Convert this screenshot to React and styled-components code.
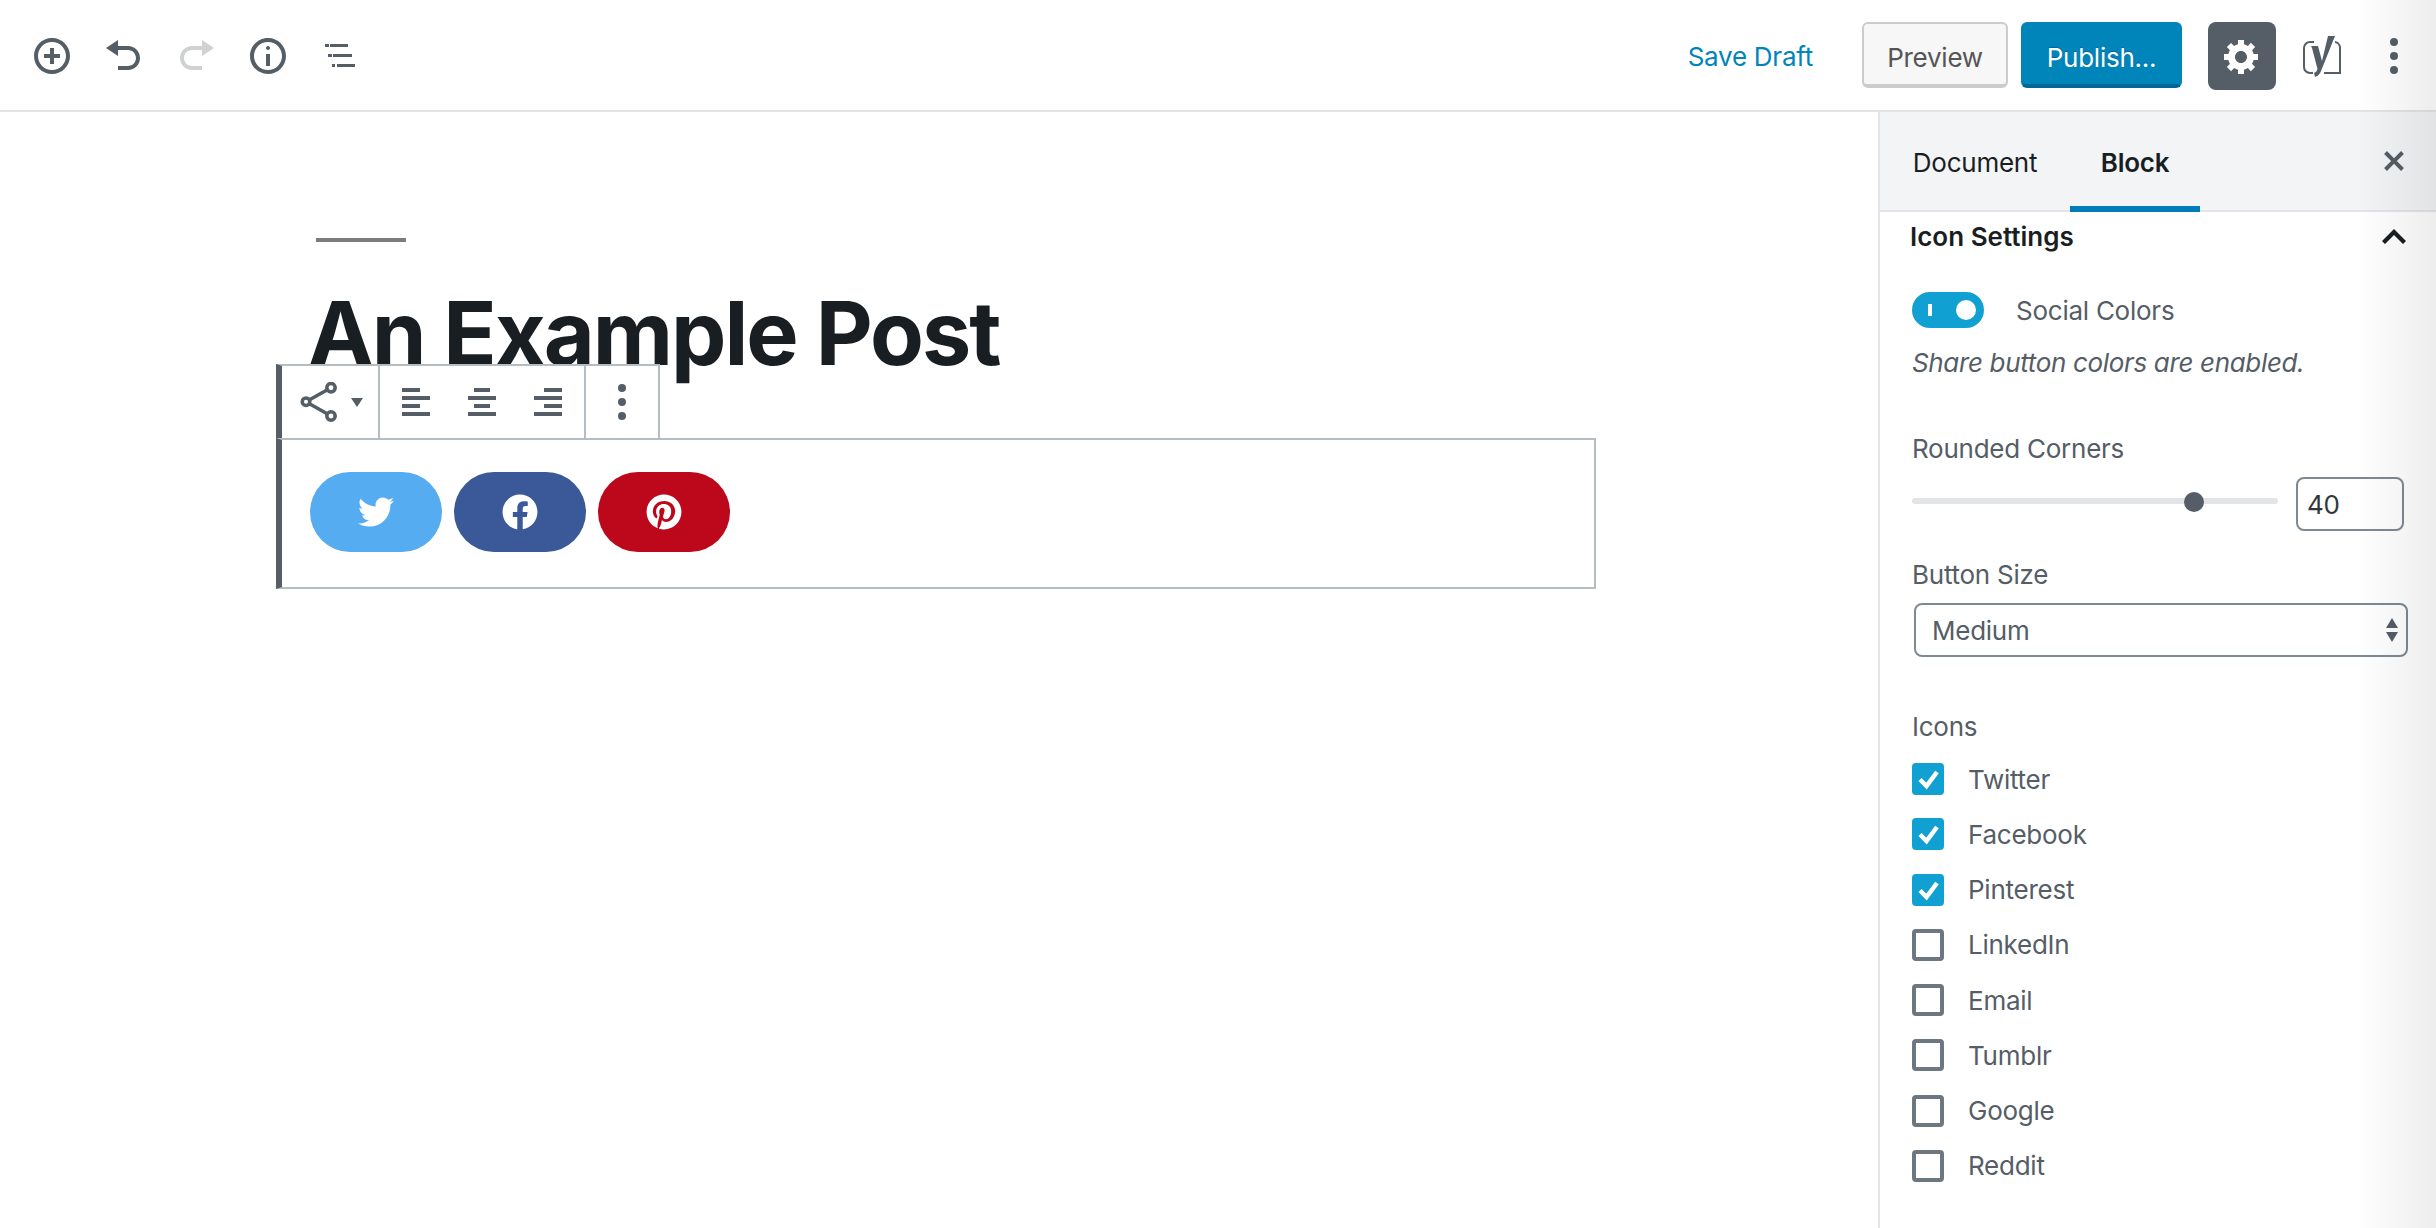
import React from "react";
import styled, { createGlobalStyle } from "styled-components";
import { FaTwitter, FaFacebook, FaPinterest } from "react-icons/fa";

const GlobalStyle = createGlobalStyle`
  html, body {
    margin: 0;
    padding: 0;
    background: #fff;
  }
  body {
    font-family: Inter, "Liberation Sans", sans-serif;
    letter-spacing: -0.25px;
    color: #555d66;
    overflow: hidden;
  }
  * {
    box-sizing: border-box;
  }
`;

const Page = styled.div`
  position: relative;
  width: 2436px;
  height: 1228px;
  display: flex;
  flex-direction: column;
  overflow: hidden;
`;

const EdgeShade = styled.div`
  position: absolute;
  top: 0;
  right: 0;
  bottom: 0;
  width: 80px;
  pointer-events: none;
  background: linear-gradient(to right, rgba(0, 0, 0, 0), rgba(0, 0, 0, 0.07));
`;

const TopBar = styled.header`
  height: 112px;
  flex: none;
  border-bottom: 2px solid #e2e4e7;
  display: flex;
  align-items: center;
  justify-content: space-between;
  padding: 2px 22px 0 32px;
`;

const ToolGroup = styled.div`
  display: flex;
  align-items: center;
  gap: 32px;
`;

const Actions = styled.div`
  display: flex;
  align-items: center;
`;

const Icon = styled.svg`
  width: 40px;
  height: 40px;
  display: block;
  flex: none;
  fill: ${(p) => p.$color || "#555d66"};
`;

const SaveDraft = styled.span`
  font-size: 26px;
  color: #0085ba;
  margin-right: 49px;
`;

const Button = styled.div`
  height: 66px;
  width: ${(p) => p.$width}px;
  margin-top: -2px;
  padding-top: 6px;
  display: flex;
  align-items: center;
  justify-content: center;
  font-size: 26px;
  border-radius: 6px;
  border: 2px solid ${(p) => (p.$primary ? "#0085ba" : "#cccccc")};
  border-bottom: 4px solid ${(p) => (p.$primary ? "#006799" : "#cccccc")};
  background: ${(p) => (p.$primary ? "#0085ba" : "#f7f7f7")};
  color: ${(p) => (p.$primary ? "#ffffff" : "#555555")};
  text-shadow: ${(p) => (p.$primary ? "0 -1px 1px #006799" : "none")};
  margin-right: ${(p) => p.$after}px;
`;

const GearButton = styled.div`
  width: 68px;
  height: 68px;
  border-radius: 8px;
  background: #555d66;
  display: flex;
  align-items: center;
  justify-content: center;
  margin-right: 25px;
`;

const YoastMark = styled.svg`
  width: 42px;
  height: 44px;
  display: block;
  margin-right: 31px;
`;

const Main = styled.div`
  flex: 1;
  display: flex;
  min-height: 0;
`;

const Editor = styled.main`
  flex: 1;
  padding: 126px 0 0 276px;
`;

const Separator = styled.div`
  width: 90px;
  height: 4px;
  background: #7c7c7c;
  margin-left: 40px;
`;

const Title = styled.h1`
  margin: 31px 0 0 32px;
  font-size: 88px;
  line-height: 120px;
  font-weight: 700;
  letter-spacing: -2px;
  color: #191e23;
  white-space: nowrap;
`;

const Block = styled.section`
  position: relative;
  width: 1320px;
  height: 151px;
  margin-top: 45px;
  border-left: 6px solid #555d66;
  border-right: 2px solid #b5bcc2;
  border-top: 2px solid #b5bcc2;
  border-bottom: 2px solid #b5bcc2;
  padding: 32px 0 0 28px;
  display: flex;
  gap: 12px;
`;

const BlockToolbar = styled.div`
  position: absolute;
  left: -6px;
  bottom: 100%;
  height: 74px;
  margin-bottom: 2px;
  display: flex;
  background: #fff;
  border-left: 6px solid #555d66;
  border-top: 2px solid #b5bcc2;
`;

const ToolbarGroup = styled.div`
  width: ${(p) => p.$width}px;
  border-right: 2px solid #b5bcc2;
  display: flex;
  align-items: center;
  justify-content: center;
  gap: ${(p) => p.$gap || 0}px;
`;

const Caret = styled.span`
  width: 0;
  height: 0;
  border-left: 6px solid transparent;
  border-right: 6px solid transparent;
  border-top: 9px solid #555d66;
  margin-left: 13px;
`;

const ShareButton = styled.div`
  width: 132px;
  height: 80px;
  border-radius: 40px;
  background: ${(p) => p.$bg};
  color: #fff;
  display: flex;
  align-items: center;
  justify-content: center;
  font-size: 36px;
`;

const Sidebar = styled.aside`
  width: 558px;
  flex: none;
  border-left: 2px solid #e2e4e7;
  display: flex;
  flex-direction: column;
`;

const Tabs = styled.div`
  height: 100px;
  flex: none;
  background: #f3f4f5;
  border-bottom: 2px solid #e2e4e7;
  display: flex;
  align-items: stretch;
  gap: 32px;
  padding: 0 22px 0 32px;
`;

const Tab = styled.div`
  width: ${(p) => p.$width}px;
  display: flex;
  align-items: center;
  justify-content: center;
  font-size: 26px;
  margin-bottom: -2px;
  color: #191e23;
  font-weight: ${(p) => (p.$active ? 600 : 400)};
  border-bottom: 6px solid ${(p) => (p.$active ? "#007cba" : "transparent")};
  padding-top: 6px;
`;

const CloseSlot = styled.div`
  margin-left: auto;
  display: flex;
  align-items: center;
`;

const PanelBody = styled.div`
  flex: 1;
  padding: 0 30px 0 32px;
`;

const PanelHeading = styled.div`
  height: 48px;
  display: flex;
  align-items: center;
  justify-content: space-between;
  font-size: 26px;
  font-weight: 600;
  letter-spacing: 0;
  color: #191e23;
  margin: 0 -8px 0 -2px;
`;

const ToggleRow = styled.div`
  display: flex;
  align-items: center;
  margin-top: 32px;
  height: 36px;
`;

const Toggle = styled.div`
  position: relative;
  width: 72px;
  height: 36px;
  border-radius: 18px;
  background: #11a0d2;
  flex: none;
  &::before {
    content: "";
    position: absolute;
    left: 16px;
    top: 12px;
    width: 4px;
    height: 12px;
    background: #fff;
  }
  &::after {
    content: "";
    position: absolute;
    right: 8px;
    top: 8px;
    width: 20px;
    height: 20px;
    border-radius: 50%;
    background: #fff;
  }
`;

const ToggleLabel = styled.span`
  margin-left: 32px;
  font-size: 26px;
`;

const Help = styled.div`
  margin-top: 17px;
  font-size: 26px;
  line-height: 36px;
  font-style: italic;
  letter-spacing: -0.34px;
`;

const FieldLabel = styled.div`
  font-size: 26px;
  line-height: 36px;
  margin-top: ${(p) => p.$top}px;
`;

const SliderRow = styled.div`
  display: flex;
  align-items: center;
  margin-top: 10px;
`;

const SliderTrack = styled.div`
  position: relative;
  width: 366px;
  height: 6px;
  margin-bottom: 6px;
  border-radius: 3px;
  background: #e2e4e7;
`;

const SliderKnob = styled.div`
  position: absolute;
  top: -6px;
  left: ${(p) => p.$left}px;
  width: 20px;
  height: 20px;
  border-radius: 50%;
  background: #555d66;
`;

const NumberInput = styled.div`
  width: 108px;
  height: 54px;
  margin-left: 18px;
  border: 2px solid #7e8993;
  border-radius: 8px;
  padding-left: 9px;
  display: flex;
  align-items: center;
  font-size: 26px;
  color: #32373c;
`;

const Select = styled.div`
  width: 494px;
  height: 54px;
  margin: 10px 0 0 2px;
  border: 2px solid #7e8993;
  border-radius: 8px;
  padding: 0 8px 0 16px;
  display: flex;
  align-items: center;
  justify-content: space-between;
  font-size: 26px;
`;

const SelectArrows = styled.svg`
  width: 12px;
  height: 24px;
  fill: #555d66;
  display: block;
`;

const CheckList = styled.div`
  display: flex;
  flex-direction: column;
  gap: 23.25px;
  margin-top: 18px;
`;

const CheckRow = styled.div`
  height: 32px;
  display: flex;
  align-items: center;
  font-size: 26px;
`;

const Checkbox = styled.div`
  width: 32px;
  height: 32px;
  flex: none;
  border-radius: 4px;
  background: ${(p) => (p.$checked ? "#11a0d2" : "#fff")};
  border: ${(p) => (p.$checked ? "0" : "4px solid #6c7781")};
  margin-right: 24px;
  display: flex;
  align-items: center;
  justify-content: center;
`;

const CheckMark = styled.svg`
  width: 24px;
  height: 24px;
  display: block;
  overflow: visible;
`;

const icons = {
  insert:
    "M10 1c-5 0-9 4-9 9s4 9 9 9 9-4 9-9-4-9-9-9zm0 16c-3.9 0-7-3.1-7-7s3.1-7 7-7 7 3.1 7 7-3.1 7-7 7zm1-11H9v3H6v2h3v3h2v-3h3V9h-3V6z",
  undo: "M12 5H7V2L1 6l6 4V7h5c2.2 0 4 1.8 4 4s-1.8 4-4 4H7v2h5c3.3 0 6-2.7 6-6s-2.7-6-6-6z",
  redo: "M8 5h5V2l6 4-6 4V7H8c-2.2 0-4 1.8-4 4s1.8 4 4 4h5v2H8c-3.3 0-6-2.7-6-6s2.7-6 6-6z",
  info: "M10 1c-5 0-9 4-9 9s4 9 9 9 9-4 9-9-4-9-9-9zm0 16c-3.9 0-7-3.1-7-7s3.1-7 7-7 7 3.1 7 7-3.1 7-7 7zM9 9h2v6H9V9zm2-3c0 .55-.45 1-1 1s-1-.45-1-1 .45-1 1-1 1 .45 1 1z",
  gear: "M18 12h-2.18c-.17.7-.44 1.35-.81 1.93l1.54 1.54-2.1 2.1-1.54-1.54c-.58.36-1.23.63-1.91.79V19H8v-2.18c-.68-.16-1.33-.43-1.91-.79l-1.54 1.54-2.12-2.12 1.54-1.54c-.36-.58-.63-1.23-.79-1.91H1V9.03h2.17c.16-.7.44-1.35.8-1.94L2.43 5.55l2.1-2.1 1.54 1.54c.58-.37 1.24-.64 1.93-.81V2h3v2.18c.68.16 1.33.43 1.91.79l1.54-1.54 2.12 2.12-1.54 1.54c.36.59.64 1.24.8 1.94H18V12zm-8.5 1.5c1.66 0 3-1.34 3-3s-1.34-3-3-3-3 1.34-3 3 1.34 3 3 3z",
  kebab: "M10 1a2 2 0 1 1 0 4 2 2 0 0 1 0-4zm0 7a2 2 0 1 1 0 4 2 2 0 0 1 0-4zm0 7a2 2 0 1 1 0 4 2 2 0 0 1 0-4z",
  close: "M14.95 6.46L11.41 10l3.54 3.54-1.41 1.41L10 11.42l-3.53 3.53-1.42-1.42L8.58 10 5.05 6.47l1.42-1.42L10 8.58l3.54-3.53z",
  up: "M10 6.5l6 6-1.5 1.5-4.5-4.5-4.5 4.5L4 12.5z",
  left: "M12 5V3H3v2h9zm5 4V7H3v2h14zm-5 4v-2H3v2h9zm5 4v-2H3v2h14z",
  center: "M14 5V3H6v2h8zm3 4V7H3v2h14zm-3 4v-2H6v2h8zm3 4v-2H3v2h14z",
  right: "M17 5V3H8v2h9zm0 4V7H3v2h14zm0 4v-2H8v2h9zm0 4v-2H3v2h14z",
};

const DashIcon = ({ name, color }) => (
  <Icon viewBox="0 0 20 20" $color={color}>
    <path d={icons[name]} />
  </Icon>
);

const ListIcon = () => (
  <Icon viewBox="0 0 40 40">
    <path d="M5 8h4v3H5zM10 8h18v3H10zM8 18h4v3H8zM13 18h19v3H13zM12 28h3v3h-3zM17 28h18v3H17z" />
  </Icon>
);

const ShareIcon = () => (
  <Icon viewBox="0 0 40 40">
    <g fill="none" stroke="#555d66" strokeWidth="3.5">
      <path d="M8 19.7L33 5.7M8 19.7L33 34" />
      <circle cx="8" cy="19.7" r="3.8" fill="#fff" />
      <circle cx="33" cy="5.7" r="4.2" fill="#fff" />
      <circle cx="33" cy="34" r="4.2" fill="#fff" />
    </g>
  </Icon>
);

const YoastIcon = () => (
  <YoastMark viewBox="0 0 42 44">
    <path
      d="M13 8H9a6 6 0 0 0-6 6v19a6 6 0 0 0 6 6h3M34 8a6 6 0 0 1 5 6v25H23"
      fill="none"
      stroke="#555d66"
      strokeWidth="2"
    />
    <path
      d="M27 2h7L20 37c-1 3-3 5-6 6l-1-4c2-1 3-2 3.500-4L11 14l-1-2h7l4 15z"
      fill="#555d66"
    />
  </YoastMark>
);

const checks = [
  { label: "Twitter", checked: true },
  { label: "Facebook", checked: true },
  { label: "Pinterest", checked: true },
  { label: "LinkedIn" },
  { label: "Email" },
  { label: "Tumblr" },
  { label: "Google" },
  { label: "Reddit" },
];

export default function App() {
  return (
    <Page>
      <GlobalStyle />
      <TopBar>
        <ToolGroup>
          <DashIcon name="insert" />
          <DashIcon name="undo" />
          <DashIcon name="redo" color="#cfd1d3" />
          <DashIcon name="info" />
          <ListIcon />
        </ToolGroup>
        <Actions>
          <SaveDraft>Save Draft</SaveDraft>
          <Button $width={146} $after={13}>
            Preview
          </Button>
          <Button $width={161} $after={26} $primary>
            Publish...
          </Button>
          <GearButton>
            <DashIcon name="gear" color="#ffffff" />
          </GearButton>
          <YoastIcon />
          <DashIcon name="kebab" />
        </Actions>
      </TopBar>
      <Main>
        <Editor>
          <Separator />
          <Title>An Example Post</Title>
          <Block>
            <BlockToolbar>
              <ToolbarGroup $width={98}>
                <ShareIcon />
                <Caret />
              </ToolbarGroup>
              <ToolbarGroup $width={206} $gap={26}>
                <DashIcon name="left" />
                <DashIcon name="center" />
                <DashIcon name="right" />
              </ToolbarGroup>
              <ToolbarGroup $width={74}>
                <DashIcon name="kebab" />
              </ToolbarGroup>
            </BlockToolbar>
            <ShareButton $bg="#55acf0">
              <FaTwitter />
            </ShareButton>
            <ShareButton $bg="#3b5998">
              <FaFacebook />
            </ShareButton>
            <ShareButton $bg="#bd081c">
              <FaPinterest />
            </ShareButton>
          </Block>
        </Editor>
        <Sidebar>
          <Tabs>
            <Tab $width={126}>Document</Tab>
            <Tab $width={130} $active>
              Block
            </Tab>
            <CloseSlot>
              <DashIcon name="close" />
            </CloseSlot>
          </Tabs>
          <PanelBody>
            <PanelHeading>
              Icon Settings
              <DashIcon name="up" color="#191e23" />
            </PanelHeading>
            <ToggleRow>
              <Toggle />
              <ToggleLabel>Social Colors</ToggleLabel>
            </ToggleRow>
            <Help>Share button colors are enabled.</Help>
            <FieldLabel $top={50}>Rounded Corners</FieldLabel>
            <SliderRow>
              <SliderTrack>
                <SliderKnob $left={272} />
              </SliderTrack>
              <NumberInput>40</NumberInput>
            </SliderRow>
            <FieldLabel $top={26}>Button Size</FieldLabel>
            <Select>
              Medium
              <SelectArrows viewBox="0 0 12 24">
                <path d="M6 0l6 10H0zM0 14h12l-6 10z" />
              </SelectArrows>
            </Select>
            <FieldLabel $top={52}>Icons</FieldLabel>
            <CheckList>
              {checks.map((item) => (
                <CheckRow key={item.label}>
                  <Checkbox $checked={item.checked}>
                    {item.checked && (
                      <CheckMark viewBox="0 0 24 24">
                        <path
                          d="M4 12.500L10.500 19L21 5"
                          fill="none"
                          stroke="#fff"
                          strokeWidth="4.5"
                        />
                      </CheckMark>
                    )}
                  </Checkbox>
                  {item.label}
                </CheckRow>
              ))}
            </CheckList>
          </PanelBody>
        </Sidebar>
      </Main>
      <EdgeShade />
    </Page>
  );
}
